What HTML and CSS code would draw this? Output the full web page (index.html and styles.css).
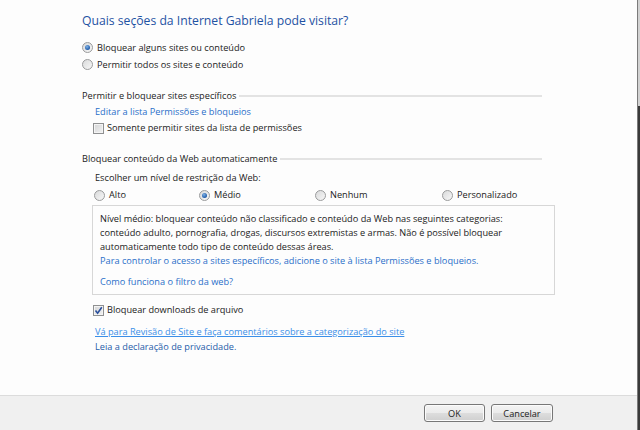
FILE: index.html
```html
<!DOCTYPE html>
<html lang="pt-BR">
<head>
<meta charset="UTF-8">
<meta name="viewport" content="width=device-width, initial-scale=1.0">
<title>Controle dos Pais - Filtro da Web</title>
<link rel="stylesheet" href="styles.css">
</head>
<body>

<div class="window">
    <div class="content">
        <div class="title">Quais seções da Internet Gabriela pode visitar?</div>
        <label class="option"><span class="radio checked"></span>Bloquear alguns sites ou conteúdo</label>
        <label class="option"><span class="radio"></span>Permitir todos os sites e conteúdo</label>

        <div class="group first">
            <div class="group-head"><span>Permitir e bloquear sites específicos</span></div>
            <a class="link" href="#">Editar a lista Permissões e bloqueios</a>
            <label class="check-row"><span class="check"></span>Somente permitir sites da lista de permissões</label>
        </div>

        <div class="group">
            <div class="group-head"><span>Bloquear conteúdo da Web automaticamente</span></div>
            <div class="label">Escolher um nível de restrição da Web:</div>
            <div class="levels">
                <label class="option"><span class="radio"></span>Alto</label>
                <label class="option"><span class="radio checked"></span>Médio</label>
                <label class="option"><span class="radio"></span>Nenhum</label>
                <label class="option"><span class="radio"></span>Personalizado</label>
            </div>
            <div class="info">
                <p>Nível médio: bloquear conteúdo não classificado e conteúdo da Web nas seguintes categorias:<br>
                conteúdo adulto, pornografia, drogas, discursos extremistas e armas. Não é possível bloquear<br>
                automaticamente todo tipo de conteúdo dessas áreas.</p>
                <a class="link" href="#">Para controlar o acesso a sites específicos, adicione o site à lista Permissões e bloqueios.</a>
                <a class="link help" href="#">Como funciona o filtro da web?</a>
            </div>
            <label class="check-row downloads"><span class="check checked">
                <svg width="9" height="9" viewBox="0 0 9 9"><path d="M1.5 4.6 L3.6 7.2 L7.8 1.2" fill="none" stroke="#2a4f9c" stroke-width="1.6"/></svg>
            </span>Bloquear downloads de arquivo</label>
            <a class="link review" href="#">Vá para Revisão de Site e faça comentários sobre a categorização do site</a>
            <a class="link privacy" href="#">Leia a declaração de privacidade.</a>
        </div>
    </div>
    <div class="footer">
        <button class="btn">OK</button>
        <button class="btn">Cancelar</button>
    </div>
</div>
<div class="edge"></div>

</body>
</html>
```

FILE: styles.css
```css
body {
    margin: 0;
    height: 430px;
    display: flex;
    background-color: #fdfdfd;
    color: #1b1b1b;
    font-family: "Open Sans", "Noto Sans", sans-serif;
    font-size: 9.2px;
    overflow: hidden;
}
.window {
    flex: 1;
    display: flex;
    flex-direction: column;
}
.content {
    flex: 1;
    padding: 11px 0 0 82px;
    display: flex;
    flex-direction: column;
    align-items: flex-start;
}
.title {
    font-size: 12.2px;
    line-height: 20px;
    color: #1f52a3;
    margin-bottom: 8px;
}
.option {
    display: flex;
    align-items: center;
    line-height: 17px;
}
.radio {
    width: 9px;
    height: 9px;
    border: 1px solid #9a9b9c;
    border-radius: 50%;
    background: linear-gradient(135deg, #d9dadb, #f7f7f7);
    margin-right: 4px;
    display: flex;
    align-items: center;
    justify-content: center;
}
.radio.checked::after {
    content: "";
    width: 5px;
    height: 5px;
    border-radius: 50%;
    background: radial-gradient(circle at 40% 35%, #7fb2e6, #1f5aa8 70%);
}

/* titled groups with a rule running to the right */
.group {
    align-self: stretch;
    display: flex;
    flex-direction: column;
    align-items: flex-start;
    margin-top: 14px;
    padding-left: 13px;
}
.group-head {
    margin-left: -13px;
    width: 460px;
    display: flex;
    align-items: center;
    line-height: 17px;
}
.group-head::after {
    content: "";
    flex: 1;
    height: 2px;
    background-color: #e3e3e3;
    margin-left: 3px;
}
.link {
    color: #2a6fc9;
    text-decoration: none;
    line-height: 16px;
}
.check-row {
    display: flex;
    align-items: center;
    line-height: 16px;
    margin-left: -2px;
}
.check {
    width: 9px;
    height: 9px;
    border: 1px solid #8f9091;
    box-shadow: inset 0 0 0 1px #f4f4f4;
    background: linear-gradient(135deg, #d4d5d6, #f2f2f2);
    margin-right: 3px;
    display: flex;
    align-items: center;
    justify-content: center;
}
.label {
    line-height: 17px;
    margin-top: 2px;
}
.levels {
    display: grid;
    grid-template-columns: 105px 116px 127px auto;
    margin: 1px 0 0 -1px;
}
.levels .option {
    line-height: 16px;
}
.info {
    margin: 2px 0 0 -3px;
    width: 447px;
    height: 77px;
    border: 1px solid #d7d7d7;
    padding: 6px 7px 5px 7px;
    display: flex;
    flex-direction: column;
    align-items: flex-start;
}
.info p {
    margin: 0;
    line-height: 14px;
}
.info .link {
    line-height: 14px;
}
.info .help {
    margin-top: 7px;
}
.downloads {
    margin-top: 7px;
}
.review {
    margin-top: 6px;
    color: #3b8fe8;
    text-decoration: underline;
    line-height: 15px;
}
.privacy {
    color: #1f5ca9;
    line-height: 15px;
}

.footer {
    box-sizing: border-box;
    height: 35px;
    border-top: 1px solid #dcdcdc;
    background-color: #f0f0f0;
    display: flex;
    justify-content: flex-end;
    align-items: flex-start;
    gap: 6px;
    padding: 8px 84px 0 0;
}
.btn {
    height: 18px;
    width: 61px;
    border: 1px solid #777;
    border-radius: 3px;
    box-shadow: inset 0 0 0 1px #fbfbfb;
    background: linear-gradient(#f3f3f3 0%, #ebebeb 50%, #dddddd 51%, #cfcfcf 100%);
    font-family: "Open Sans", "Noto Sans", sans-serif;
    font-size: 9.2px;
    color: #1b1b1b;
    padding: 0;
}
.btn + .btn {
    width: 62px;
}

/* window frame on the right side */
.edge {
    width: 2px;
    border-left: 1px solid #7b7b7b;
    background: linear-gradient(#d2d2d2 0, #d2d2d2 106px, #3a3a3a 106px);
}
```
